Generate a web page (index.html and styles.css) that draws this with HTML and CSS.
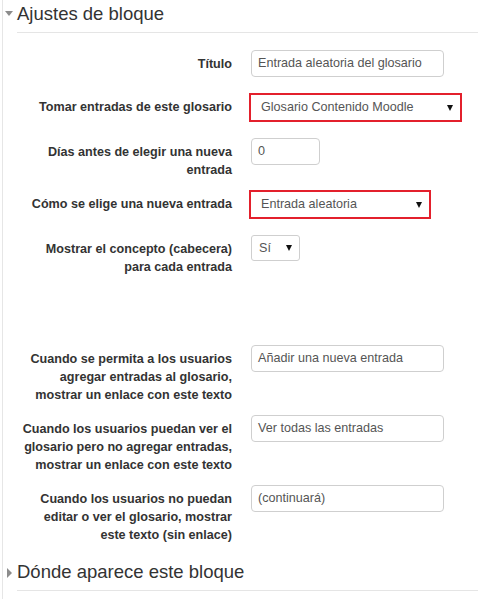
FILE: index.html
```html
<!DOCTYPE html>
<html lang="es">
<head>
<meta charset="utf-8">
<title>Ajustes de bloque</title>
<link rel="stylesheet" href="styles.css">
</head>
<body>
<div class="page">
  <div class="legend">
    <span class="twisty"><span class="tri-down"></span></span>
    <h2 class="legend-title">Ajustes de bloque</h2>
  </div>
  <div class="form">
    <div class="row">
      <div class="lbl">Título</div>
      <div class="ctl"><div class="input w-wide">Entrada aleatoria del glosario</div></div>
    </div>
    <div class="row">
      <div class="lbl">Tomar entradas de este glosario</div>
      <div class="ctl"><div class="select red w-red1">Glosario Contenido Moodle<span class="caret"></span></div></div>
    </div>
    <div class="row">
      <div class="lbl">Días antes de elegir una nueva entrada</div>
      <div class="ctl"><div class="input w-small">0</div></div>
    </div>
    <div class="row">
      <div class="lbl">Cómo se elige una nueva entrada</div>
      <div class="ctl"><div class="select red w-red2">Entrada aleatoria<span class="caret"></span></div></div>
    </div>
    <div class="row row-spaced">
      <div class="lbl">Mostrar el concepto (cabecera) para cada entrada</div>
      <div class="ctl"><div class="select plain w-si">Sí<span class="caret"></span></div></div>
    </div>
    <div class="row">
      <div class="lbl">Cuando se permita a los usuarios agregar entradas al glosario, mostrar un enlace con este texto</div>
      <div class="ctl"><div class="input w-wide">Añadir una nueva entrada</div></div>
    </div>
    <div class="row">
      <div class="lbl">Cuando los usuarios puedan ver el glosario pero no agregar entradas, mostrar un enlace con este texto</div>
      <div class="ctl"><div class="input w-wide">Ver todas las entradas</div></div>
    </div>
    <div class="row">
      <div class="lbl">Cuando los usuarios no puedan editar o ver el glosario, mostrar este texto (sin enlace)</div>
      <div class="ctl"><div class="input w-wide">(continuará)</div></div>
    </div>
  </div>
  <div class="legend legend-2">
    <span class="twisty"><span class="tri-right"></span></span>
    <h2 class="legend-title">Dónde aparece este bloque</h2>
  </div>
</div>
</body>
</html>
```
FILE: styles.css
```css
html, body {
  margin: 0;
  padding: 0;
  background: #fff;
}
body {
  font-family: "Liberation Sans", Arial, sans-serif;
  color: #333;
}
.page {
  margin-left: 2px;
  border-left: 1px solid #e6e6e6;
  min-height: 599px;
}
.legend {
  display: flex;
}
.twisty {
  width: 14px;
  flex: none;
  position: relative;
}
.tri-down {
  position: absolute;
  left: 2px;
  top: 11px;
  width: 0;
  height: 0;
  border-left: 4px solid transparent;
  border-right: 4px solid transparent;
  border-top: 5px solid #8c8c8c;
}
.tri-right {
  position: absolute;
  left: 4px;
  top: 10px;
  width: 0;
  height: 0;
  border-top: 5px solid transparent;
  border-bottom: 5px solid transparent;
  border-left: 5px solid #8c8c8c;
}
.legend-title {
  flex: 1;
  margin: 0;
  font-weight: normal;
  font-size: 18.5px;
  line-height: 28px;
  padding-bottom: 4px;
  color: #333;
  border-bottom: 1px solid #e5e5e5;
}
.legend-2 {
  margin-top: 14px;
}
.form {
  padding-top: 17px;
}
.row {
  display: flex;
  align-items: flex-start;
  margin-bottom: 11px;
  padding-left: 15px;
}
.row-spaced {
  margin-bottom: 69px;
}
.lbl {
  width: 214px;
  flex: none;
  text-align: right;
  font-weight: bold;
  font-size: 12.6px;
  line-height: 18px;
  padding-top: 5px;
  color: #333;
}
.ctl {
  margin-left: 19px;
  padding-bottom: 5px;
}
.input {
  box-sizing: border-box;
  height: 27px;
  border: 1px solid #cfcfcf;
  border-radius: 4px;
  padding: 0 6px;
  font-size: 12.6px;
  line-height: 25px;
  color: #555;
  white-space: nowrap;
}
.w-wide { width: 193px; }
.w-small { width: 69px; }
.select {
  box-sizing: border-box;
  position: relative;
  font-size: 12.6px;
  color: #555;
  white-space: nowrap;
  background: #fff;
}
.select.red {
  height: 29px;
  margin-left: -2px;
  border: 2px solid #e3202c;
  padding-left: 10px;
  line-height: 25px;
}
.w-red1 { width: 213px; }
.w-red2 { width: 182px; }
.select.plain {
  height: 26px;
  border: 1px solid #cfcfcf;
  border-radius: 3px;
  padding-left: 7px;
  line-height: 24px;
}
.w-si { width: 49px; }
.caret {
  position: absolute;
  right: 7px;
  top: 50%;
  margin-top: -3px;
  width: 0;
  height: 0;
  border-left: 3px solid transparent;
  border-right: 3px solid transparent;
  border-top: 6px solid #111;
}
```
